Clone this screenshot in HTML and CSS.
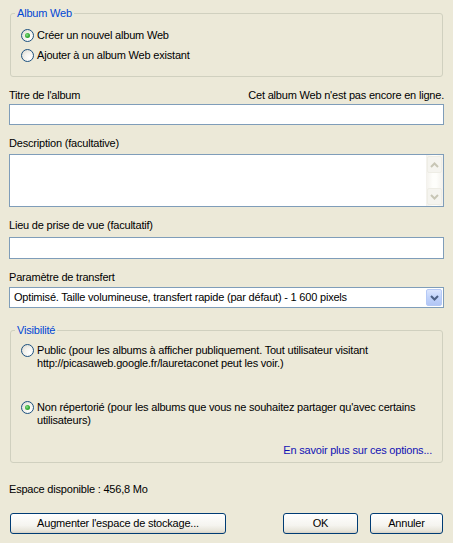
FILE: index.html
```html
<!DOCTYPE html>
<html lang="fr">
<head>
<meta charset="utf-8">
<title>Album Web</title>
<link rel="stylesheet" href="styles.css">
</head>
<body>
<div class="dialog">
  <fieldset class="group group-album">
    <legend class="group-title">Album Web</legend>
    <div class="radio-row"><span class="radio checked"></span><span class="radio-text">Créer un nouvel album Web</span></div>
    <div class="radio-row"><span class="radio"></span><span class="radio-text">Ajouter à un album Web existant</span></div>
  </fieldset>

  <div class="field-head head-title"><span>Titre de l'album</span><span>Cet album Web n'est pas encore en ligne.</span></div>
  <div class="textbox tb-title"></div>

  <div class="field-head head-desc">Description (facultative)</div>
  <div class="memo">
    <div class="memo-text"></div>
    <div class="scrollbar">
      <div class="sb-btn"><svg width="9" height="6" viewBox="0 0 9 6"><path d="M1 5 L4.5 1.5 L8 5" fill="none" stroke="#C8C6B6" stroke-width="2"/></svg></div>
      <div class="sb-track"></div>
      <div class="sb-btn"><svg width="9" height="6" viewBox="0 0 9 6"><path d="M1 1 L4.5 4.5 L8 1" fill="none" stroke="#C8C6B6" stroke-width="2"/></svg></div>
    </div>
  </div>

  <div class="field-head head-place">Lieu de prise de vue (facultatif)</div>
  <div class="textbox tb-place"></div>

  <div class="field-head head-transfer">Paramètre de transfert</div>
  <div class="combo">
    <span class="combo-text">Optimisé. Taille volumineuse, transfert rapide (par défaut) - 1 600 pixels</span>
    <span class="combo-btn"><svg width="9" height="6" viewBox="0 0 9 6"><path d="M1 1 L4.5 4.5 L8 1" fill="none" stroke="#4D6185" stroke-width="2"/></svg></span>
  </div>

  <fieldset class="group group-vis">
    <legend class="group-title">Visibilité</legend>
    <div class="radio-block"><span class="radio"></span><span class="radio-text">Public (pour les albums à afficher publiquement. Tout utilisateur visitant<br>http://picasaweb.google.fr/lauretaconet peut les voir.)</span></div>
    <div class="radio-block rb-unlisted"><span class="radio checked"></span><span class="radio-text">Non répertorié (pour les albums que vous ne souhaitez partager qu'avec certains<br>utilisateurs)</span></div>
    <div class="more-link">En savoir plus sur ces options...</div>
  </fieldset>

  <div class="space-info">Espace disponible : 456,8 Mo</div>

  <div class="buttons">
    <div class="btn btn-storage">Augmenter l'espace de stockage...</div>
    <div class="btn btn-ok">OK</div>
    <div class="btn btn-cancel">Annuler</div>
  </div>
</div>
</body>
</html>
```

FILE: styles.css
```css
html, body {
  margin: 0;
  padding: 0;
}
body {
  background: #ECE9D8;
  font-family: "Liberation Sans", Arial, sans-serif;
  font-size: 11px;
  line-height: 13px;
  letter-spacing: -0.2px;
  color: #000;
  width: 453px;
  height: 543px;
  overflow: hidden;
}
.dialog {
  padding: 0 9px;
}

/* group boxes */
.group {
  margin: 0 1px;
  border: 1px solid #D0D0BF;
  border-radius: 3px;
  min-width: 0;
}
.group-title {
  color: #0046D5;
  padding: 0 2px;
  margin-left: -6px;
  line-height: 13px;
}
.group-album {
  margin-top: 7px;
  padding: 5px 10px 11px;
}
.group-vis {
  margin-top: 16px;
  padding: 7px 10px 5px;
}

/* radios */
.radio-row {
  display: flex;
  align-items: center;
  height: 20px;
}
.radio-block {
  display: flex;
  align-items: flex-start;
}
.rb-unlisted {
  margin-top: 31px;
}
.radio {
  flex: none;
  position: relative;
  box-sizing: border-box;
  width: 13px;
  height: 13px;
  border: 1px solid #1C5180;
  border-radius: 50%;
  background: radial-gradient(circle at 70% 70%, #FFFFFF 0%, #F4F3EE 45%, #D6D4CA 100%);
  margin-right: 3px;
}
.radio.checked::after {
  content: "";
  position: absolute;
  left: 3px;
  top: 3px;
  width: 5px;
  height: 5px;
  border-radius: 50%;
  background: radial-gradient(circle at 40% 40%, #8EE08E 0%, #3DB03D 45%, #1C8E1C 100%);
}

/* labels and fields */
.field-head {
  margin-top: 12px;
  height: 13px;
}
.head-title {
  display: flex;
  justify-content: space-between;
}
.textbox {
  box-sizing: border-box;
  border: 1px solid #7F9DB9;
  background: #FFFFFF;
}
.tb-title {
  margin-top: 2px;
  height: 21px;
}
.head-desc {
  margin-top: 12px;
}
.memo {
  box-sizing: border-box;
  margin-top: 4px;
  height: 53px;
  border: 1px solid #7F9DB9;
  background: #FFFFFF;
  display: flex;
}
.memo-text {
  flex: 1;
}
.scrollbar {
  width: 17px;
  display: flex;
  flex-direction: column;
  background: linear-gradient(to right, #F3F1EC 0%, #FEFEFB 40%, #FEFEFB 60%, #F3F1EC 100%);
}
.sb-btn {
  box-sizing: border-box;
  height: 17px;
  margin: 1px;
  border: 1px solid #EEEDE5;
  border-radius: 2px;
  background: #F5F4EF;
  display: flex;
  align-items: center;
  justify-content: center;
}
.sb-btn + .sb-track + .sb-btn {
  margin-top: 0;
}
.sb-track {
  flex: 1;
}
.tb-place {
  margin-top: 5px;
  height: 22px;
}
.combo {
  box-sizing: border-box;
  margin-top: 3px;
  height: 21px;
  border: 1px solid #7F9DB9;
  background: #FFFFFF;
  display: flex;
  align-items: center;
  padding: 1px;
}
.combo-text {
  flex: 1;
  padding-left: 3px;
  white-space: nowrap;
}
.combo-btn {
  box-sizing: border-box;
  width: 16px;
  height: 17px;
  border: 1px solid #B5C9F6;
  border-radius: 2px;
  background: linear-gradient(#DCE6FD, #C1D3FB 50%, #B2C6F5);
  display: flex;
  align-items: center;
  justify-content: center;
}

.more-link {
  margin-top: 17px;
  text-align: right;
  color: #1212B4;
}
.space-info {
  margin-top: 20px;
}

/* buttons */
.buttons {
  display: flex;
  margin-top: 17px;
  padding: 0 1px;
}
.btn {
  box-sizing: border-box;
  height: 21px;
  border: 1px solid #003C74;
  border-radius: 3px;
  background: linear-gradient(#FFFFFF 0%, #F5F4EF 60%, #E6E3D8 90%, #D6D0C5 100%);
  display: flex;
  align-items: center;
  justify-content: center;
}
.btn-storage {
  width: 216px;
}
.btn-ok {
  width: 75px;
  margin-left: auto;
}
.btn-cancel {
  width: 73px;
  margin-left: 12px;
}
```
